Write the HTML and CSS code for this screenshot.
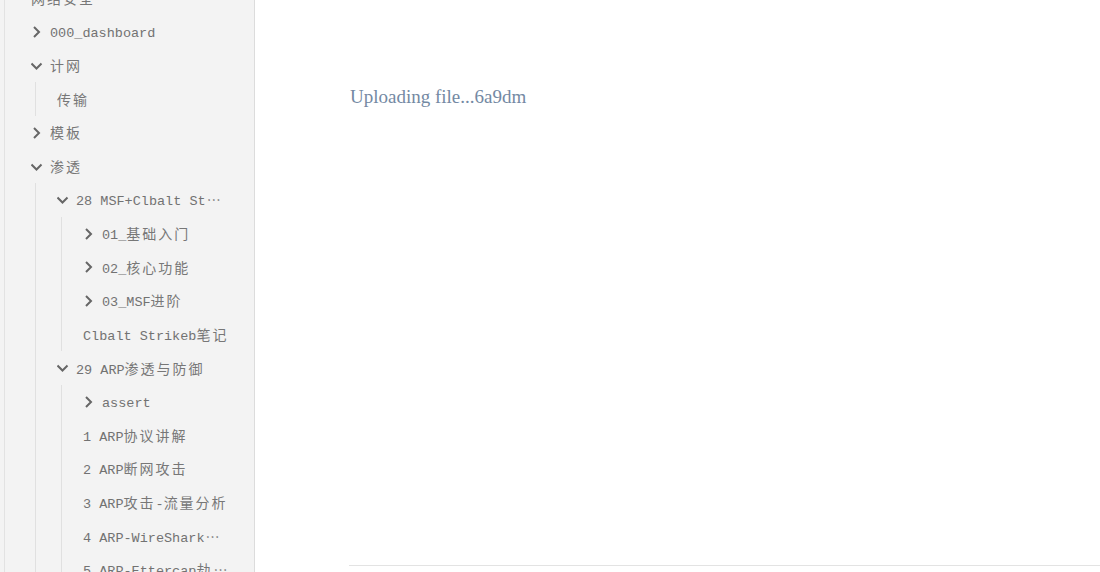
FILE: index.html
```html
<!DOCTYPE html>
<html lang="zh">
<head>
<meta charset="utf-8">
<title>Notes</title>
<link rel="stylesheet" href="styles.css">
</head>
<body>
<div class="app">
  <aside class="sidebar">
    <div class="tree">
      <div class="row leaf"><span class="label"><span class="zh">网络安全</span></span></div>
      <div class="root-group">
      <div class="row"><svg class="chev" viewBox="0 0 16 16"><path d="M3 3l5 5-5 5"/></svg><span class="label">000_dashboard</span></div>
      <div class="row"><svg class="chev" viewBox="0 0 16 16"><path d="M0.5 5.5l5 5 5-5"/></svg><span class="label"><span class="zh">计网</span></span></div>
      <div class="group">
        <div class="row leaf"><span class="label"><span class="zh">传输</span></span></div>
      </div>
      <div class="row"><svg class="chev" viewBox="0 0 16 16"><path d="M3 3l5 5-5 5"/></svg><span class="label"><span class="zh">模板</span></span></div>
      <div class="row"><svg class="chev" viewBox="0 0 16 16"><path d="M0.5 5.5l5 5 5-5"/></svg><span class="label"><span class="zh">渗透</span></span></div>
      <div class="group">
        <div class="row"><svg class="chev" viewBox="0 0 16 16"><path d="M0.5 5.5l5 5 5-5"/></svg><span class="label">28 MSF+Clbalt St<span class="zh dots">⋯</span></span></div>
        <div class="group">
          <div class="row"><svg class="chev" viewBox="0 0 16 16"><path d="M3 3l5 5-5 5"/></svg><span class="label">01_<span class="zh">基础入门</span></span></div>
          <div class="row"><svg class="chev" viewBox="0 0 16 16"><path d="M3 3l5 5-5 5"/></svg><span class="label">02_<span class="zh">核心功能</span></span></div>
          <div class="row"><svg class="chev" viewBox="0 0 16 16"><path d="M3 3l5 5-5 5"/></svg><span class="label">03_MSF<span class="zh">进阶</span></span></div>
          <div class="row leaf"><span class="label">Clbalt Strikeb<span class="zh">笔记</span></span></div>
        </div>
        <div class="row"><svg class="chev" viewBox="0 0 16 16"><path d="M0.5 5.5l5 5 5-5"/></svg><span class="label">29 ARP<span class="zh">渗透与防御</span></span></div>
        <div class="group">
          <div class="row"><svg class="chev" viewBox="0 0 16 16"><path d="M3 3l5 5-5 5"/></svg><span class="label">assert</span></div>
          <div class="row leaf"><span class="label">1 ARP<span class="zh">协议讲解</span></span></div>
          <div class="row leaf"><span class="label">2 ARP<span class="zh">断网攻击</span></span></div>
          <div class="row leaf"><span class="label">3 ARP<span class="zh">攻击</span>-<span class="zh">流量分析</span></span></div>
          <div class="row leaf"><span class="label">4 ARP-WireShark<span class="zh dots">⋯</span></span></div>
          <div class="row leaf"><span class="label">5 ARP-Ettercap<span class="zh">劫</span><span class="zh dots">⋯</span></span></div>
        </div>
      </div>
      </div>
    </div>
  </aside>
  <main class="main">
    <p class="upload">Uploading file...6a9dm</p>
    <div class="spacer"></div>
    <div class="rule"></div>
  </main>
</div>
</body>
</html>
```

FILE: styles.css
```css
* { box-sizing: border-box; }
html, body { margin: 0; padding: 0; height: 100%; }
body {
  background: #ffffff;
  overflow: hidden;
}
.app {
  display: flex;
  height: 572px;
  width: 1100px;
}
.sidebar {
  width: 255px;
  flex: none;
  background: #f3f3f3;
  border-right: 1px solid #dcdcdc;
  overflow: hidden;
  padding-left: 4px;
}
.tree {
  margin-top: -18.4px;
  border-left: 1px solid #e2e2e2;
  min-height: 620px;
  padding-left: 26px;
  padding-right: 20px;
  font-family: "Liberation Mono", "Noto Sans CJK SC", monospace;
  font-size: 13.5px;
  color: #727272;
}
.row {
  display: flex;
  align-items: center;
  height: 33.625px;
  white-space: nowrap;
  min-width: 0;
}
.chev {
  flex: none;
  width: 16px;
  height: 16px;
  margin-right: 3px;
  fill: none;
  stroke: #666666;
  stroke-width: 2;
  stroke-linecap: butt;
  stroke-linejoin: miter;
}
.label {
  display: block;
  line-height: 20px;
  padding-top: 4.6px;
  overflow: hidden;
  white-space: nowrap;
  min-width: 0;
}
.zh {
  font-family: "Noto Sans CJK SC", sans-serif;
  font-size: 14px;
  line-height: 14px;
  letter-spacing: 2px;
  color: #777777;
}
.dots {
  letter-spacing: 0;
  display: inline-block;
  width: 16px;
  text-align: center;
}
.group {
  margin-left: 4px;
  border-left: 1px solid #e0e0e0;
  padding-left: 21px;
}
.main {
  flex: 1;
  display: flex;
  flex-direction: column;
  padding-left: 94px;
}
.upload {
  margin: 86px 0 0 1px;
  font-family: "Liberation Serif", serif;
  font-size: 19px;
  color: #7489a3;
}
.spacer { flex: 1; }
.rule {
  height: 1px;
  background: #e3e3e3;
  margin-bottom: 6px;
}
```
